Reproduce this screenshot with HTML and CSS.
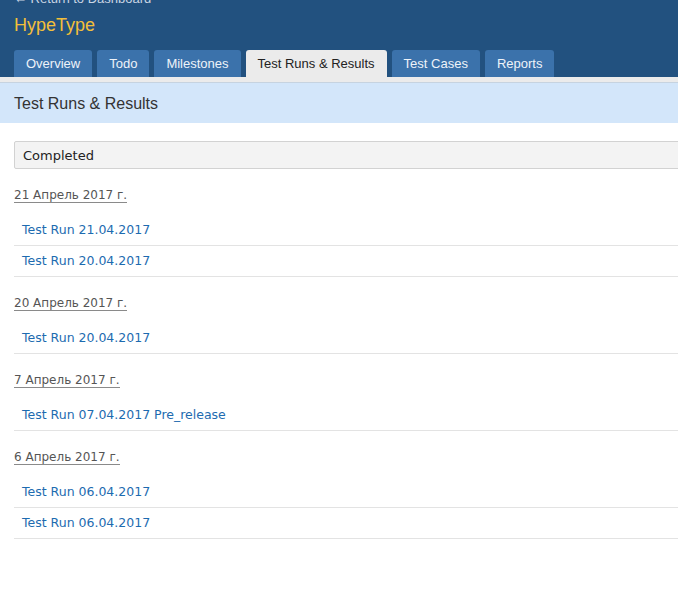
FILE: index.html
```html
<!DOCTYPE html>
<html lang="ru">
<head>
<meta charset="utf-8">
<title>HypeType - Test Runs &amp; Results</title>
<link rel="stylesheet" href="styles.css">
</head>
<body>
<header class="header">
  <a class="back-link" href="#">&larr; Return to Dashboard</a>
  <div class="project-title">HypeType</div>
  <nav class="tabs">
    <a class="tab" href="#">Overview</a>
    <a class="tab" href="#">Todo</a>
    <a class="tab" href="#">Milestones</a>
    <a class="tab tab-active" href="#">Test Runs &amp; Results</a>
    <a class="tab" href="#">Test Cases</a>
    <a class="tab" href="#">Reports</a>
  </nav>
</header>
<div class="tab-strip"></div>
<div class="page-title">Test Runs &amp; Results</div>
<main class="content">
  <div class="select-box">Completed</div>

  <section class="group">
    <div class="group-date"><span class="date-label">21 Апрель 2017 г.</span></div>
    <ul class="runs">
      <li class="run"><a href="#">Test Run 21.04.2017</a></li>
      <li class="run"><a href="#">Test Run 20.04.2017</a></li>
    </ul>
  </section>

  <section class="group">
    <div class="group-date"><span class="date-label">20 Апрель 2017 г.</span></div>
    <ul class="runs">
      <li class="run"><a href="#">Test Run 20.04.2017</a></li>
    </ul>
  </section>

  <section class="group">
    <div class="group-date"><span class="date-label">7 Апрель 2017 г.</span></div>
    <ul class="runs">
      <li class="run"><a href="#">Test Run 07.04.2017 Pre_release</a></li>
    </ul>
  </section>

  <section class="group">
    <div class="group-date"><span class="date-label">6 Апрель 2017 г.</span></div>
    <ul class="runs">
      <li class="run"><a href="#">Test Run 06.04.2017</a></li>
      <li class="run"><a href="#">Test Run 06.04.2017</a></li>
    </ul>
  </section>
</main>
</body>
</html>
```

FILE: styles.css
```css
html, body {
  margin: 0;
  padding: 0;
  background: #ffffff;
  overflow: hidden;
}

body {
  font-family: "DejaVu Sans", Verdana, sans-serif;
  color: #333333;
}

.header {
  display: flex;
  flex-direction: column;
  background: #22517f;
  padding: 0 14px;
}

.back-link {
  margin-top: -9px;
  font-family: "Liberation Sans", Arial, sans-serif;
  font-size: 13px;
  line-height: 16px;
  color: #c9d5e3;
  text-decoration: none;
}

.project-title {
  margin-top: 7px;
  font-family: "Liberation Sans", Arial, sans-serif;
  font-size: 18px;
  line-height: 22px;
  color: #f2bf3a;
}

.tabs {
  display: flex;
  gap: 5px;
  margin-top: 14px;
}

.tab {
  display: block;
  height: 27px;
  line-height: 28px;
  padding: 0 12px;
  background: #3b72ab;
  color: #eef3f9;
  font-family: "Liberation Sans", Arial, sans-serif;
  font-size: 13px;
  text-decoration: none;
  border-radius: 3px 3px 0 0;
}

.tab-active {
  background: #ebebeb;
  color: #222222;
}

.tab-strip {
  height: 5px;
  background: #ebebeb;
  border-bottom: 1px solid #c6d3e0;
}

.page-title {
  height: 40px;
  line-height: 42px;
  padding-left: 14px;
  background: #d3e6fa;
  font-family: "Liberation Sans", Arial, sans-serif;
  font-size: 16px;
  color: #333333;
}

.content {
  padding-left: 14px;
  margin-right: -30px;
}

.select-box {
  margin-top: 18px;
  height: 26px;
  line-height: 28px;
  padding-left: 8px;
  background: #f3f3f3;
  border: 1px solid #d2d2d2;
  border-radius: 2px;
  font-size: 13px;
  color: #222222;
}

.group {
  margin-top: 19px;
}

.group-date {
  display: flex;
}

.date-label {
  display: block;
  font-size: 12px;
  line-height: 14px;
  color: #555555;
  border-bottom: 1px solid #8a8a8a;
}

.runs {
  list-style: none;
  margin: 12px 0 0 0;
  padding: 0;
}

.run {
  padding: 8px 8px;
  line-height: 14px;
  font-size: 12.5px;
  border-bottom: 1px solid #e3e3e3;
}

.run a {
  color: #1d6bb0;
  text-decoration: none;
}
```
